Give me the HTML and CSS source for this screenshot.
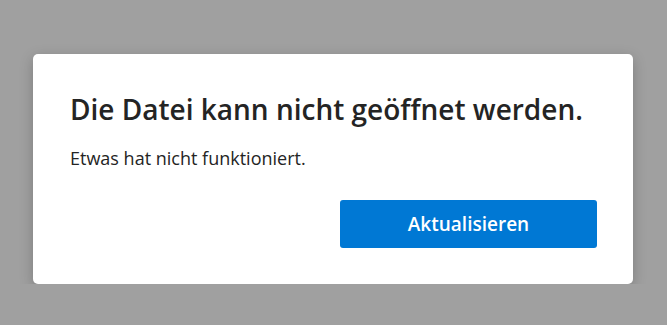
FILE: index.html
```html
<!DOCTYPE html>
<html>
<head>
<meta http-equiv="Content-Type" content="text/html; charset=utf-8"/>
<title>Fehler</title>
<link rel="stylesheet" href="styles.css">
</head>
<body>
<div class="dialog">
  <h1 class="dialog-title">Die Datei kann nicht geöffnet werden.</h1>
  <p class="dialog-text">Etwas hat nicht funktioniert.</p>
  <div class="dialog-actions">
    <button class="btn-primary">Aktualisieren</button>
  </div>
</div>
</body>
</html>
```

FILE: styles.css
```css
body {
  margin: 0;
  background-color: #a0a0a0;
  font-family: "Open Sans", "Noto Sans", sans-serif;
  color: #242424;
}

.dialog {
  box-sizing: border-box;
  width: 600px;
  height: 230px;
  margin: 54px 0 0 33px;
  padding: 37px 36px 36px 37px;
  background-color: #fff;
  border-radius: 5px;
  box-shadow: 0 4px 14px rgba(0, 0, 0, 0.22);
  display: flex;
  flex-direction: column;
}

.dialog-title {
  margin: 0;
  font-size: 28px;
  line-height: 36px;
  font-weight: 600;
}

.dialog-text {
  margin: 19px 0 0 0;
  font-size: 18px;
  line-height: 24px;
}

.dialog-actions {
  margin-top: auto;
  display: flex;
  justify-content: flex-end;
}

.btn-primary {
  width: 257px;
  height: 48px;
  border: none;
  border-radius: 3px;
  background-color: #0078d4;
  color: #fff;
  font-family: "Open Sans", "Noto Sans", sans-serif;
  font-size: 19px;
  font-weight: 600;
}
```
